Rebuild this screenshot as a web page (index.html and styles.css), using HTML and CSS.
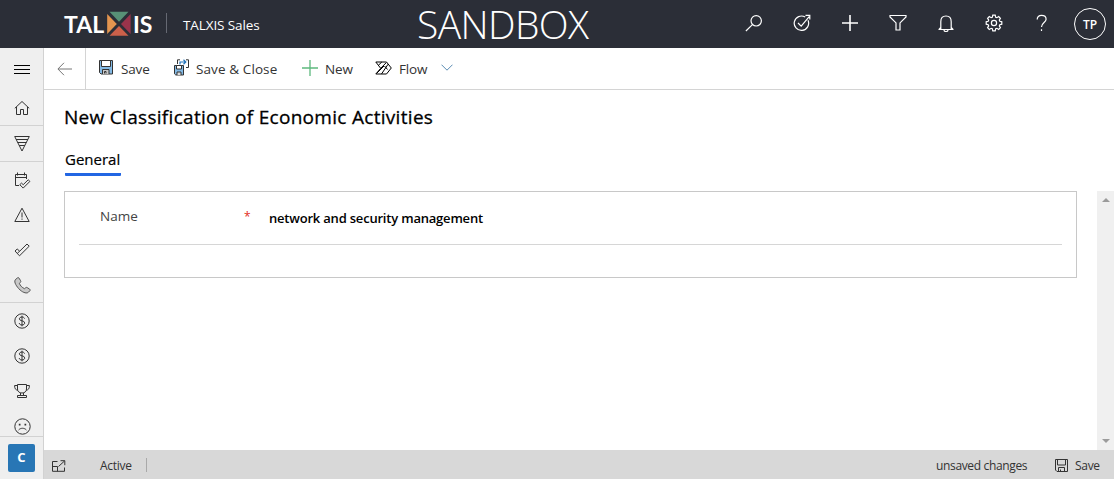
FILE: index.html
```html
<!DOCTYPE html>
<html lang="en">
<head>
<meta charset="utf-8">
<title>TALXIS Sales</title>
<link rel="stylesheet" href="styles.css">
</head>
<body>
<div class="app">
  <header class="topbar">
    <div class="brand">
      <div class="logo">
        <span class="logo-text logo-left">TAL</span>
        <svg class="logo-mark" width="26" height="26" viewBox="0 0 26 26"><path fill="#579176" d="M3.5.8h19L13 10.8z"/><path fill="#e3954f" d="M1.2 3v20l9.6-10z"/><path fill="#99334b" d="M24.6 3v20L15 13z"/><path fill="#cb604a" d="M3.5 24.8h19L13 15z"/></svg>
        <span class="logo-text logo-right">IS</span>
      </div>
      <span class="brand-divider"></span>
      <span class="app-name">TALXIS Sales</span>
    </div>
    <div class="environment">SANDBOX</div>
    <nav class="top-actions">
      <span class="top-action"><svg class="icon light" width="18" height="18" viewBox="0 0 18 18"><circle cx="11.2" cy="6.8" r="5.2"/><path d="M7.4 10.6.9 17"/></svg></span>
      <span class="top-action"><svg class="icon light" width="18" height="18" viewBox="0 0 18 18"><path d="M12.2 3.1A7.2 7.2 0 1 0 15 6.3M5 9l3.2 3.2 8-9.6M12.5 1.3h4.3v4.2"/></svg></span>
      <span class="top-action"><svg class="icon light thick" width="18" height="18" viewBox="0 0 18 18"><path d="M9 1v16M1 9h16"/></svg></span>
      <span class="top-action"><svg class="icon light" width="18" height="18" viewBox="0 0 18 18"><path d="M1 1.500h16v1.400l-6 6V16H7V8.900l-6-6z"/></svg></span>
      <span class="top-action"><svg class="icon light" width="18" height="18" viewBox="0 0 18 18"><path d="M1.500 15.500h15M3.800 15.300V7.700c0-3.600 2-5.700 5.200-5.700s5.200 2.100 5.200 5.700v7.600M2 15.300l1.800-2M16 15.300l-1.800-2M7 15.800c0 1.300.7 1.800 2 1.800s2-.5 2-1.800"/></svg></span>
      <span class="top-action"><svg class="icon light" width="18" height="18" viewBox="0 0 18 18"><path d="M7.8 1.2h2.4l.5 2 1.2.5 1.8-1.1 1.7 1.7-1.1 1.8.5 1.2 2 .5v2.4l-2 .5-.5 1.2 1.1 1.8-1.7 1.7-1.8-1.1-1.2.5-.5 2H7.8l-.5-2-1.2-.5-1.8 1.1-1.7-1.7 1.1-1.8-.5-1.2-2-.5V7.8l2-.5.5-1.2-1.1-1.8 1.7-1.7 1.8 1.1 1.2-.5z"/><circle cx="9" cy="9" r="2.6"/></svg></span>
      <span class="top-action"><svg class="icon light" width="18" height="18" viewBox="0 0 18 18"><path d="M4.200 5.400C4.200 3 5.800 1.400 8.500 1.400s4.600 1.500 4.600 3.800C13.100 8.500 8.500 8.500 8.500 13M8.500 15.300v1.800"/></svg></span>
      <span class="avatar">TP</span>
    </nav>
  </header>

  <aside class="sidebar">
    <div class="side-item menu"><svg class="icon black" width="16" height="11" viewBox="0 0 16 11"><path d="M0 1.500h16M0 5.500h16M0 9.500h16"/></svg></div>
    <div class="side-group"><div class="side-item"><svg class="icon" width="16" height="16" viewBox="0 0 16 16"><path d="M.8 8.300 8 1.500l7.200 6.800M2.500 7v7.500h4v-5h3v5h4V7"/></svg></div></div>
    <div class="side-group"><div class="side-item"><svg class="icon" width="16" height="16" viewBox="0 0 16 16"><path d="M.7.500h14.600L8 15zM2 3.500h12M3.600 6.500h8.800M5.200 9.500h5.600"/></svg></div></div>
    <div class="side-group">
      <div class="side-item shifted"><svg class="icon" width="17" height="17" viewBox="0 0 17 17"><path d="M5 13.500H1.500v-11h11V7M1.500 5.500h11M3.500.500v3M10.500.500v3"/><path d="M5.800 12.700l1.700-1.600 1.700 1.600 5-4.900 1.700 1.600-6.700 6.700z"/></svg></div>
      <div class="side-item"><svg class="icon" width="16" height="16" viewBox="0 0 16 16"><path d="M8 1.200.8 14.500h14.400zM8 5.500v5M8 11.500v1.300"/></svg></div>
      <div class="side-item"><svg class="icon" width="16" height="16" viewBox="0 0 16 16"><path d="m1 9 2.200-2 2.500 2.200L13 2l2.200 2.200-9.700 9.600zM3.400 11.200l2.300-2"/></svg></div>
      <div class="side-item shifted"><svg class="icon phone" width="17" height="17" viewBox="0 0 17 17"><path d="M1.200 3 3.300.9c.6-.5 1.200-.5 1.700.2l1.600 2.600c.4.700.2 1.200-.3 1.700l-.9.900c.7 2.200 2.600 4.300 5.200 5.400l1-.9c.5-.5 1-.6 1.600-.2l2.500 1.600c.6.400.6 1.100.1 1.600l-1.500 1.500c-1.300 1.300-4.800.7-8.200-2.300C2.400 9.500-.2 5.100 1.200 3z"/></svg></div>
    </div>
    <div class="side-group last">
      <div class="side-item"><svg class="icon" width="16" height="16" viewBox="0 0 16 16"><circle cx="8" cy="8" r="7.200"/><path d="M10.500 5.600C10.200 4.500 9.300 4 8 4c-1.500 0-2.600.700-2.600 1.900C5.400 8.600 10.700 7 10.700 10c0 1.200-1.100 2-2.700 2-1.500 0-2.600-.600-2.800-1.900M8 2.700v10.600"/></svg></div>
      <div class="side-item"><svg class="icon" width="16" height="16" viewBox="0 0 16 16"><circle cx="8" cy="8" r="7.200"/><path d="M10.500 5.600C10.200 4.500 9.300 4 8 4c-1.500 0-2.600.700-2.600 1.900C5.400 8.600 10.700 7 10.700 10c0 1.200-1.100 2-2.700 2-1.500 0-2.600-.600-2.800-1.900M8 2.700v10.600"/></svg></div>
      <div class="side-item"><svg class="icon" width="16" height="16" viewBox="0 0 16 16"><path d="M3.500 1.500h9V6c0 2.500-1.800 4-4.500 4S3.500 8.500 3.500 6zM3.500 2.500H.6c0 3 .8 4.500 3.400 4.700M12.500 2.500h2.900c0 3-.8 4.500-3.400 4.700M6.500 10v2.500M9.500 10v2.500M3.500 14.500v-2h9v2z"/></svg></div>
      <div class="side-item shifted"><svg class="icon" width="17" height="17" viewBox="0 0 17 17"><circle cx="8.500" cy="8.500" r="7.700"/><path d="M4.600 12c2-2.300 5.800-2.300 7.800 0"/><path class="eyes" d="M4.800 5.800h1.700v1.600H4.800zM10.500 5.800h1.700v1.600h-1.700z"/></svg></div>
    </div>
    <div class="area-switch"><span class="area-badge">C</span></div>
  </aside>

  <main class="content">
    <div class="commands">
      <div class="back"><svg class="icon gray" width="15" height="14" viewBox="0 0 15 14"><path d="M7 .8.900 7 7 13.200M1 7h14"/></svg></div>
      <div class="command save"><svg width="15" height="15" viewBox="0 0 15 15"><path fill="#83b9e4" stroke="#333" d="M.5.500h13v13.500H2L.5 12.500z"/><path fill="#fff" stroke="#333" d="M2.500.500h9v6h-9z"/><path fill="#c8c8c8" stroke="#333" d="M3.500 14V9.500h6.500V14M5.500 13.500v-2H7v2"/></svg><span>Save</span></div>
      <div class="command save-close"><svg width="16" height="17" viewBox="0 0 16 17"><path fill="#83b9e4" stroke="#333" d="M.5 6.500h9v9.500H1.800L.5 14.800z"/><path fill="#fff" stroke="#333" d="M2.500 6.500h5v3.500h-5z"/><path fill="#ddd" stroke="#333" d="M3 16v-3h4v3"/><path fill="none" stroke="#333" d="M3.500 5V.8H6M12 .8h2.500v7.700H12"/><path fill="none" stroke="#2374bb" stroke-width="1.200" d="M6 5.500V3h5.800M9.500.8 11.800 3 9.500 5.200"/></svg><span>Save &amp; Close</span></div>
      <div class="command new"><svg width="16" height="16" viewBox="0 0 16 16"><path fill="none" stroke="#5db97e" stroke-width="1.300" d="M8 0v16M0 8h16"/></svg><span>New</span></div>
      <div class="command flow"><svg class="icon black" width="17" height="14" viewBox="0 0 17 14"><path d="M.8 1h10.700l4.800 6-4.800 6H.8l4.900-5.700zM3.400 4.300 6.800 1M5.700 7.300l5.500-5.600M1.500 12.500 9 5M6.500 13l6.600-9.800M9.500 5l3 3.500"/></svg><span>Flow</span><svg class="chevron" width="12" height="7" viewBox="0 0 12 7"><path fill="none" stroke="#598bb2" d="m.5.700 5.500 5.500L11.500.700"/></svg></div>
    </div>
    <div class="page-head">
      <h1 class="title">New Classification of Economic Activities</h1>
      <div class="tabs"><span class="tab">General</span></div>
    </div>
    <div class="form-area">
      <section class="card">
        <div class="field">
          <span class="field-label">Name</span>
          <span class="required">*</span>
          <span class="field-value">network and security management</span>
        </div>
      </section>
      <div class="scrollbar"><span class="arrow up"></span><span class="arrow down"></span></div>
    </div>
    <footer class="statusbar">
      <svg class="icon popout" width="14" height="12" viewBox="0 0 14 12"><path d="M5.500 1.500h-5v9.800h12V7.500M.5 6.500h5v4.800M6.500 6.500l6-5.500M8.500.700h4.300v4.500"/></svg>
      <span class="state">Active</span>
      <span class="status-divider"></span>
      <span class="unsaved">unsaved changes</span>
      <svg class="icon status-disk" width="13" height="13" viewBox="0 0 13 13"><path d="M.5.500h12v12H2L.5 11zM2.500.500h8v5.500h-8zM3.500 12V8.500h6V12M5.500 12v-1.500"/></svg>
      <span class="status-save">Save</span>
    </footer>
  </main>
</div>
</body>
</html>
```

FILE: styles.css
```css
* { box-sizing: border-box; }
body { margin: 0; font-family: "Open Sans", "Noto Sans", sans-serif; background: #fff; }
svg { display: block; flex: none; }
.app { display: grid; grid-template: 48px 431px / 44px 1070px; width: 1114px; height: 479px; overflow: hidden; white-space: nowrap; }
.icon { fill: none; stroke: #333; stroke-width: 1; }
.icon.light { stroke: #fff; stroke-width: 1.2; }
.icon.thick { stroke-width: 1.6; }
.icon.black { stroke: #000; stroke-width: 1; }
.icon.gray { stroke: #777; }
.icon.phone { fill: #c8c8c8; stroke: #555; }
.icon .eyes { fill: #333; stroke: none; }

.topbar { grid-column: 1 / 3; display: grid; grid-template-columns: 417px 313px 384px; background: #2b2e37; color: #fff; }
.brand { display: flex; align-items: center; padding-left: 64px; }
.logo { display: flex; align-items: center; width: 102px; height: 48px; }
.logo-text { font: 700 23px/48px Lato, sans-serif; }
.logo-left { width: 42px; letter-spacing: 0; }
.logo-right { padding-left: 1px; letter-spacing: 0; }
.brand-divider { width: 1px; height: 20px; margin-bottom: 2px; background: #666973; }
.app-name { padding: 2px 0 0 16px; font-size: 13.5px; letter-spacing: -0.1px; }
.environment { font-size: 39px; font-weight: 300; line-height: 48px; letter-spacing: -0.6px; }
.top-actions { display: flex; }
.top-action { display: flex; align-items: center; justify-content: center; width: 48px; height: 46px; }
.avatar { width: 32px; height: 32px; margin: 8px 0 0 8px; border: 1px solid #fff; border-radius: 50%; font-size: 12px; font-weight: 600; line-height: 32px; text-align: center; }

.sidebar { display: flex; flex-direction: column; overflow: hidden; background: #efefef; border-right: 1px solid #d2d2d2; }
.side-item { display: flex; align-items: center; justify-content: center; flex: none; height: 35px; padding-left: 1px; }
.side-item.menu { height: 42px; }
.side-item.shifted { padding: 2px 0 0 1px; }
.side-group { border-bottom: 1px solid #d2d2d2; }
.side-group.last { height: 133px; overflow: hidden; border: 0; }
.area-switch { flex: none; height: 43px; padding: 7px 8px; border-top: 1px solid #d2d2d2; }
.area-badge { display: block; width: 27px; height: 28px; border-radius: 2px; background: #2876b5; color: #fff; font-size: 13px; font-weight: 700; line-height: 26px; text-align: center; }

.content { display: flex; flex-direction: column; min-width: 0; }
.commands { display: flex; height: 42px; border-bottom: 1px solid #d4d4d4; color: #333; font-size: 13.5px; letter-spacing: -0.15px; }
.back { display: flex; align-items: center; justify-content: center; width: 42px; border-right: 1px solid #d4d4d4; }
.command { display: flex; align-items: center; }
.command.save { width: 75px; padding-left: 13px; gap: 7px; }
.command.save svg { margin-bottom: 2px; }
.command.save-close { width: 128px; padding-left: 13px; gap: 6px; letter-spacing: 0.1px; }
.command.save-close svg { margin-bottom: 3px; }
.command.new { width: 74px; padding-left: 13px; gap: 7px; }
.command.new svg, .command.flow svg { margin-bottom: 2px; }
.command.flow { padding-left: 12px; gap: 7px; }
.chevron { margin-left: 7px; }

.page-head { height: 101px; padding: 14px 0 0 20px; }
.title { margin: 0; font-size: 19px; font-weight: 500; line-height: 26px; letter-spacing: 0.3px; color: #000; -webkit-text-stroke: 0.3px #000; }
.tabs { display: flex; padding: 18px 0 0 1px; }
.tab { width: 56px; height: 28px; border-bottom: 3px solid #2266e3; font-size: 15px; font-weight: 500; line-height: 22px; border-radius: 1px; -webkit-text-stroke: 0.2px #000; }
.form-area { display: flex; justify-content: space-between; height: 259px; padding-left: 20px; }
.card { width: 1013px; height: 87px; padding: 0 14px; border: 1px solid #c8c8c8; }
.field { display: flex; height: 53px; padding-left: 21px; border-bottom: 1px solid #d6d6d6; }
.field-label { width: 144px; padding-top: 14px; font-size: 13.5px; line-height: 20px; color: #444; }
.required { width: 25px; padding-top: 15px; font-size: 12px; line-height: 20px; color: #e22b20; }
.field-value { padding-top: 16px; font-size: 13px; font-weight: 600; line-height: 20px; letter-spacing: -0.2px; color: #000; }
.scrollbar { display: flex; flex-direction: column; align-items: center; justify-content: space-between; width: 17px; padding: 7px 0; background: #f0f0f0; }
.arrow { border: 4px solid transparent; border-top-width: 0; border-bottom-width: 0; }
.arrow.up { border-bottom: 4px solid #9b9b9b; }
.arrow.down { border-top: 4px solid #9b9b9b; }
.statusbar { display: flex; align-items: center; height: 29px; padding: 2px 0 0 8px; background: #d8d8d8; color: #333; font-size: 12px; }
.state { width: 46px; margin-left: 34px; letter-spacing: -0.3px; }
.status-divider { width: 1px; height: 14px; margin-bottom: 1px; background: #a9a9a9; }
.unsaved { width: 119px; margin-left: 789px; letter-spacing: -0.35px; }
.status-disk { margin-bottom: 1px; }
.status-save { margin-left: 7px; letter-spacing: -0.3px; }
```
